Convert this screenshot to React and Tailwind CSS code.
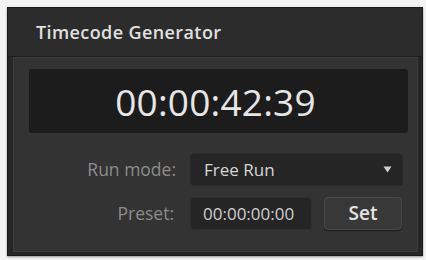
export default function App() {
  const font = { fontFamily: '"Open Sans", "Liberation Sans", sans-serif' };
  return (
    <div className="w-[426px] h-[260px] bg-[#f4f4f4] pt-[7px] pl-[7px] pr-[3px] overflow-hidden" style={font}>
      <div className="h-[249px] bg-[#262626] border border-[#1a1a1a] flex flex-col shadow-[0_1px_2px_rgba(0,0,0,0.4)]">
        <div className="h-[49px] bg-[#2c2c2c] flex items-center pl-[28px] border-b border-[#1e1e1e]">
          <span className="text-[18px] font-semibold text-[#e0e0e0] tracking-[0.4px]">Timecode Generator</span>
        </div>
        <div className="flex-1 ml-[5px] mr-[4px] mb-[3px] bg-[#333333] border border-[#3c3c3c] pl-[15px] pr-[9px] pt-[11px]">
          <div className="h-[64px] bg-[#1c1c1c] rounded-[3px] flex items-center justify-center pr-[6px]">
            <span className="text-[37px] leading-none text-[#e6e6e6] tracking-[0.2px]">00:00:42:39</span>
          </div>
          <div className="flex items-center mt-[20px]">
            <div className="w-[161px] text-right pr-[14px] text-[17.5px] text-[#8c8c8c] whitespace-nowrap">Run mode:</div>
            <div className="w-[213px] h-[33px] bg-[#252525] rounded-[4px] border border-[#2a2a2a] flex items-center pl-[13px] pr-[10px] justify-between">
              <span className="text-[17px] text-[#d6d6d6]">Free Run</span>
              <svg width="9" height="7" viewBox="0 0 9 7"><path d="M0.5 0.5 L8.5 0.5 L4.5 6.5 Z" fill="#d0d0d0" /></svg>
            </div>
          </div>
          <div className="flex items-center mt-[11px]">
            <div className="w-[161px] text-right pr-[16px] text-[17.5px] text-[#8c8c8c]">Preset:</div>
            <div className="w-[122px] h-[33px] bg-[#252525] rounded-[4px] border border-[#2e2e2e] flex items-center pl-[12px]">
              <span className="text-[17px] text-[#cfcfcf]">00:00:00:00</span>
            </div>
            <div className="ml-[12px] w-[78px] h-[33px] bg-[#383838] rounded-[4px] border border-[#4a4a4a] shadow-[0_1px_1px_rgba(0,0,0,0.5)] flex items-center justify-center">
              <span className="text-[19px] font-semibold text-[#e4e4e4]">Set</span>
            </div>
          </div>
        </div>
      </div>
    </div>
  );
}
